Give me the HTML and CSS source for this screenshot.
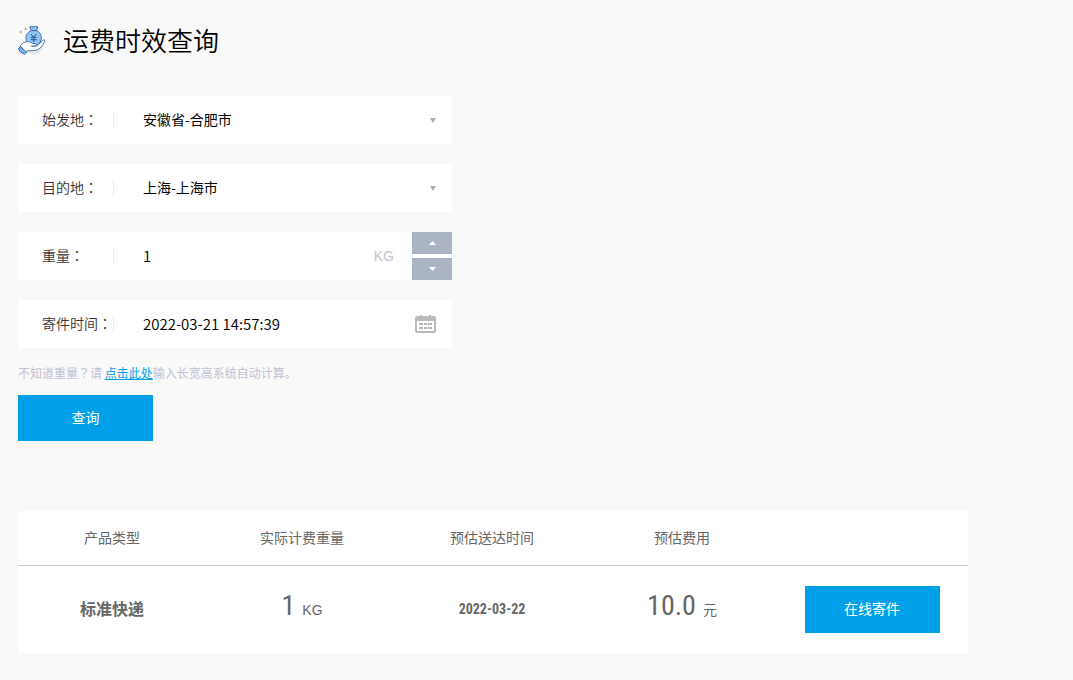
FILE: index.html
```html
<!DOCTYPE html>
<html lang="zh-CN">
<head>
<meta charset="utf-8">
<meta name="viewport" content="width=device-width, initial-scale=1">
<title>运费时效查询</title>
<link rel="stylesheet" href="styles.css">
</head>
<body>
<main class="page">
  <header class="heading">
    <svg class="heading-icon" viewBox="0 0 81 87" aria-hidden="true">
      <circle cx="47" cy="57" r="29" fill="#e6e6e8"/>
      <path d="M8 13v10M3 18h10M23 4v10M18 9h10" stroke="#b4b6bc" stroke-width="3" fill="none"/>
      <path d="M40 14 35 3q6-4 11 0 6-4 14 0l-5 11c12 4 15 13 15 21 0 14-8 23-23 23S24 49 24 35c0-9 6-18 16-21Z" fill="#8fc4f7" stroke="#3d70a9" stroke-width="3"/>
      <path d="M39 14h17" stroke="#35659c" stroke-width="3"/>
      <path d="m39 24 8 10 8-10M47 34v14M38 34h18M38 41h18" stroke="#28548a" stroke-width="3" fill="none"/>
      <path d="M7 59q7-11 19-12 10-1 17 5l10 1q5 3 0 7l-13 1 16-1 16-14 5-5q4 0 3 4-4 15-17 24-7 5-18 5H30l-8 5Z" fill="#fff" stroke="#5279a8" stroke-width="3" stroke-linejoin="round"/>
      <path d="m7 61 19 18-7 6Q7 80 1 69Z" fill="#79b5ef" stroke="#35659c" stroke-width="3" stroke-linejoin="round"/>
    </svg>
    <h1 class="title">运费时效查询</h1>
  </header>

  <form class="query">
    <div class="field">
      <label class="field-label" for="origin">始发地<span class="colon" lang="zh-TW">：</span></label>
      <select class="control" id="origin"><option>安徽省-合肥市</option></select>
      <svg class="arrow" viewBox="0 0 6 5" aria-hidden="true"><path d="M0 0h6L3 5Z" fill="#b0b0b0"/></svg>
    </div>
    <div class="field">
      <label class="field-label" for="destination">目的地<span class="colon" lang="zh-TW">：</span></label>
      <select class="control" id="destination"><option>上海-上海市</option></select>
      <svg class="arrow" viewBox="0 0 6 5" aria-hidden="true"><path d="M0 0h6L3 5Z" fill="#b0b0b0"/></svg>
    </div>
    <div class="field">
      <label class="field-label" for="weight">重量<span class="colon" lang="zh-TW">：</span></label>
      <input class="control numeric" id="weight" type="text" inputmode="decimal" value="1">
      <span class="unit">KG</span>
      <div class="stepper">
        <button class="step" type="button" aria-label="增加重量"><svg width="7" height="4" viewBox="0 0 7 4"><path d="M0 4h7L3.500 0Z" fill="#fff"/></svg></button>
        <button class="step" type="button" aria-label="减少重量"><svg width="7" height="4" viewBox="0 0 7 4"><path d="M0 0h7L3.500 4Z" fill="#fff"/></svg></button>
      </div>
    </div>
    <div class="field">
      <label class="field-label" for="send-time">寄件时间<span class="colon" lang="zh-TW">：</span></label>
      <input class="control numeric" id="send-time" type="text" value="2022-03-21 14:57:39">
      <svg class="calendar" viewBox="0 0 21 18" aria-hidden="true">
        <path d="M5 0h2v3H5zM14 0h2v3h-2z" fill="#bbb"/>
        <rect x="1" y="2" width="19" height="15" rx="1" fill="#fff" stroke="#bbb" stroke-width="2"/>
        <path d="M1 2h19v4H1z" fill="#bbb"/>
        <path d="M4 8h4v2H4zM9 8h3v2H9zM13 8h4v2h-4zM4 12h4v2H4zM9 12h3v2H9zM13 12h4v2h-4z" fill="#b4b4b4"/>
      </svg>
    </div>
    <p class="hint">不知道重量<span class="colon" lang="zh-TW">？</span>请 <a class="hint-link" href="#size">点击此处</a>输入长宽高系统自动计算。</p>
    <button class="button" type="submit">查询</button>
  </form>

  <table class="results">
    <thead>
      <tr><th>产品类型</th><th>实际计费重量</th><th>预估送达时间</th><th>预估费用</th><th></th></tr>
    </thead>
    <tbody>
      <tr>
        <td class="product">标准快递</td>
        <td class="amount"><span class="figure">1</span><span class="figure-unit">KG</span></td>
        <td class="date">2022-03-22</td>
        <td class="amount"><span class="figure">10.0</span><span class="figure-unit">元</span></td>
        <td><button class="button" type="button">在线寄件</button></td>
      </tr>
    </tbody>
  </table>
</main>
</body>
</html>
```
FILE: styles.css
```css
* {
  box-sizing: border-box;
}

body {
  margin: 0;
  background: #f9f9f9;
  color: #333;
  font: 14px/20px "Noto Sans CJK SC", sans-serif;
}

button,
input,
select {
  margin: 0;
  border: 0;
  border-radius: 0;
  font: inherit;
}

.page {
  padding: 20px 18px;
}

.heading {
  display: flex;
  align-items: center;
  gap: 18px;
  height: 40px;
  margin-bottom: 36px;
}

.heading-icon {
  width: 27px;
  height: 29px;
}

.title {
  margin: 0;
  color: #000;
  font-size: 26px;
  font-weight: 350;
  line-height: 40px;
}

.query {
  display: flex;
  flex-direction: column;
  align-items: flex-start;
  max-width: 434px;
  margin-bottom: 70px;
}

.field {
  display: flex;
  align-items: center;
  width: 100%;
  height: 48px;
  margin-bottom: 20px;
  padding-left: 24px;
  background: #fff;
}

.field-label {
  flex: none;
  width: 72px;
  border-right: 1px solid #ebebeb;
  padding-bottom: 2px;
  font-weight: 350;
  line-height: 16px;
  white-space: nowrap;
}

.colon {
  font-family: "Noto Sans CJK TC", sans-serif;
}

.control {
  flex: 1;
  min-width: 0;
  height: 48px;
  padding: 0 0 2px 29px;
  appearance: none;
  background: transparent;
  color: #000;
}

.numeric {
  font-size: 15px;
  font-weight: 350;
}

.arrow {
  width: 6px;
  height: 5px;
  margin-right: 16px;
}

.unit {
  margin-right: 18px;
  color: #c4c3cf;
  font-family: "Liberation Sans", Arial, sans-serif;
}

.stepper {
  display: flex;
  flex-direction: column;
  gap: 4px;
}

.step {
  display: grid;
  place-items: center;
  width: 40px;
  height: 22px;
  padding: 0;
  background: #aab4c4;
}

.calendar {
  width: 21px;
  height: 18px;
  margin-right: 16px;
}

.hint {
  margin: -5px 0 12px;
  color: #c1c0d0;
  font-size: 12px;
}

.hint-link {
  color: #00a0e9;
}

.button {
  width: 135px;
  height: 46px;
  padding: 0 0 2px;
  background: #00a0e9;
  color: #fff;
}

.results {
  width: 100%;
  max-width: 950px;
  border-collapse: collapse;
  table-layout: fixed;
  background: #fff;
  color: #666;
  text-align: center;
}

.results th {
  height: 54px;
  padding: 0 2px 2px 0;
  border-bottom: 1px solid #ccc;
  font-weight: 400;
}

.results td {
  height: 88px;
  padding: 0 2px 0 0;
}

.results .product {
  padding-bottom: 2px;
  font-size: 16px;
  font-weight: 700;
}

.results .date {
  font: 700 14px/20px "Roboto Condensed", "Open Sans Condensed", "DejaVu Sans Condensed", Roboto, sans-serif;
}

.results .amount {
  padding-bottom: 6px;
}

.figure {
  margin-right: 7px;
  font: 400 28px/40px "Roboto Condensed", "Open Sans Condensed", Roboto, sans-serif;
}

.figure-unit {
  font-family: "Liberation Sans", "Noto Sans CJK SC", sans-serif;
}

.results .button {
  height: 47px;
}
```
